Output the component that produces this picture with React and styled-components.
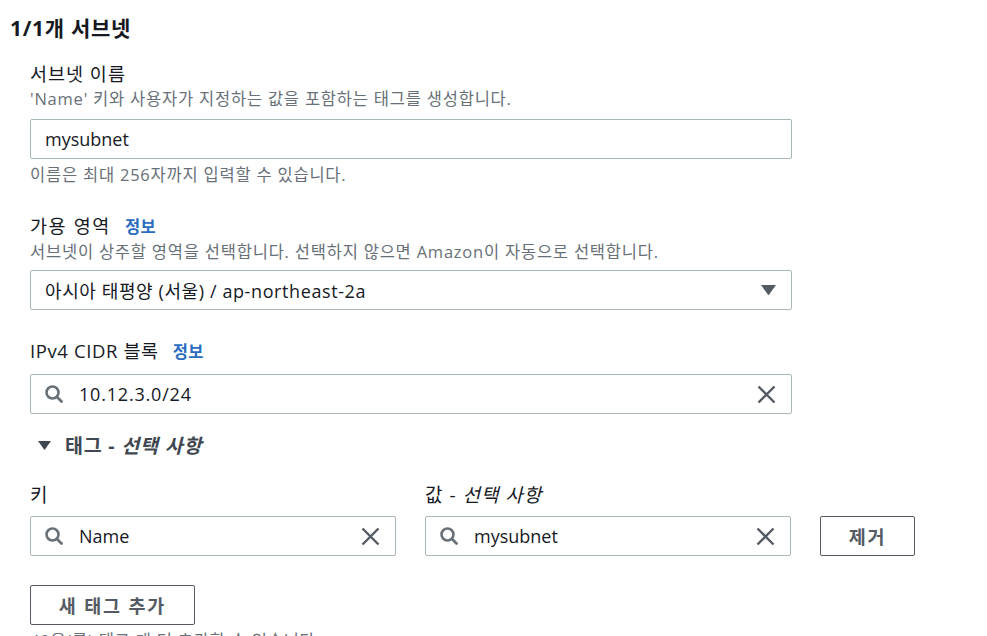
import React from 'react';
import styled, { createGlobalStyle } from 'styled-components';

const GlobalStyle = createGlobalStyle`
  body {
    margin: 0;
    background: #ffffff;
    font-family: 'Open Sans', 'Noto Sans CJK KR', sans-serif;
    color: #16191f;
  }
`;

const Page = styled.div`
  padding: 14px 0 0 10px;
`;

const Title = styled.h2`
  margin: 0;
  font-size: 21px;
  font-weight: 700;
  line-height: 28px;
  letter-spacing: 0.7px;
`;

const Body = styled.div`
  padding-left: 20px;
  width: 762px;
`;

const Field = styled.div`
  margin-top: ${(p) => p.$top || 0}px;
`;

const Label = styled.div`
  display: flex;
  align-items: baseline;
  gap: 14px;
  font-size: 18.5px;
  line-height: 24px;
  letter-spacing: ${(p) => p.$spacing ?? 0.8}px;
`;

const Info = styled.span`
  font-size: 16.5px;
  font-weight: 600;
  color: #2b6cbf;
  letter-spacing: 0.5px;
`;

const Description = styled.div`
  margin-top: 2px;
  font-size: 16.5px;
  line-height: 22px;
  color: #687078;
  letter-spacing: 0.78px;
  white-space: nowrap;
`;

const Hint = styled(Description)`
  margin-top: 5px;
`;

const Control = styled.div`
  box-sizing: border-box;
  display: flex;
  align-items: center;
  gap: 16px;
  height: 40px;
  margin-top: ${(p) => p.$top || 0}px;
  padding: 0 15px 0 14px;
  border: 1px solid #aab7b8;
  border-radius: 2px;
  font-size: 18px;
`;

const Value = styled.span`
  flex: 1;
  white-space: nowrap;
  letter-spacing: ${(p) => p.$spacing || 0}px;
`;

const Toggle = styled.div`
  display: flex;
  align-items: center;
  gap: 14px;
  margin-top: 20px;
  padding-left: 8px;
  font-size: 19.5px;
  font-weight: 700;
  line-height: 24px;
  letter-spacing: 0.8px;
  color: #414750;
  em {
    font-style: italic;
  }
`;

const TagGrid = styled.div`
  display: grid;
  grid-template-columns: 366px 366px 95px;
  column-gap: 29px;
  row-gap: 9px;
  margin-top: 25px;
  align-items: end;
`;

const TagLabel = styled.div`
  font-size: 19px;
  line-height: 24px;
  letter-spacing: 1px;
  em {
    font-style: italic;
  }
`;

const Button = styled.button`
  box-sizing: border-box;
  display: block;
  height: 40px;
  width: ${(p) => p.$width}px;
  margin-top: ${(p) => p.$top || 0}px;
  padding: 0;
  background: #ffffff;
  border: 1px solid #545b64;
  border-radius: 2px;
  font-family: 'Open Sans', 'Noto Sans CJK KR', sans-serif;
  font-size: 18.5px;
  font-weight: 700;
  color: #545b64;
  letter-spacing: 1.8px;
`;

const Footnote = styled(Description)`
  margin-top: 5px;
`;

function SearchIcon() {
  return (
    <svg width="18" height="18" viewBox="0 0 18 18" fill="none">
      <circle cx="7.5" cy="7.5" r="6" stroke="#687078" strokeWidth="2.6" />
      <path d="M12 12 L16.5 16.5" stroke="#687078" strokeWidth="2.8" strokeLinecap="round" />
    </svg>
  );
}

function ClearIcon() {
  return (
    <svg width="19" height="19" viewBox="0 0 19 19" fill="none">
      <path d="M1.5 1.5 L17.5 17.5 M17.5 1.5 L1.5 17.5" stroke="#545b64" strokeWidth="2.4" />
    </svg>
  );
}

function Caret({ size = 16, color = '#545b64' }) {
  return (
    <svg width={size} height={size * 0.7} viewBox="0 0 16 11">
      <polygon points="0,0 16,0 8,11" fill={color} />
    </svg>
  );
}

function SearchInput({ value, spacing }) {
  return (
    <Control>
      <SearchIcon />
      <Value $spacing={spacing}>{value}</Value>
      <ClearIcon />
    </Control>
  );
}

export default function App() {
  return (
    <Page>
      <GlobalStyle />
      <Title>1/1개 서브넷</Title>
      <Body>
        <Field $top={20}>
          <Label $spacing={1}>서브넷 이름</Label>
          <Description>'Name' 키와 사용자가 지정하는 값을 포함하는 태그를 생성합니다.</Description>
          <Control $top={9}>
            <Value>mysubnet</Value>
          </Control>
          <Hint>이름은 최대 256자까지 입력할 수 있습니다.</Hint>
        </Field>

        <Field $top={28}>
          <Label $spacing={1.6}>
            가용 영역 <Info>정보</Info>
          </Label>
          <Description>
            서브넷이 상주할 영역을 선택합니다. 선택하지 않으면 Amazon이 자동으로 선택합니다.
          </Description>
          <Control $top={7}>
            <Value $spacing={0.6}>아시아 태평양 (서울) / ap-northeast-2a</Value>
            <Caret size={15} />
          </Control>
        </Field>

        <Field $top={29}>
          <Label $spacing={0.6}>
            IPv4 CIDR 블록 <Info>정보</Info>
          </Label>
          <Control $top={10}>
            <SearchIcon />
            <Value $spacing={0.8}>10.12.3.0/24</Value>
            <ClearIcon />
          </Control>
        </Field>

        <Toggle>
          <Caret size={13} color="#414750" />
          <span>
            태그 - <em>선택 사항</em>
          </span>
        </Toggle>

        <TagGrid>
          <TagLabel>키</TagLabel>
          <TagLabel>
            값 - <em>선택 사항</em>
          </TagLabel>
          <span />
          <SearchInput value="Name" />
          <SearchInput value="mysubnet" />
          <Button $width={95}>제거</Button>
        </TagGrid>

        <Button $width={165} $top={29}>새 태그 추가</Button>
        <Footnote>49을(를) 태그 개 더 추가할 수 있습니다.</Footnote>
      </Body>
    </Page>
  );
}
